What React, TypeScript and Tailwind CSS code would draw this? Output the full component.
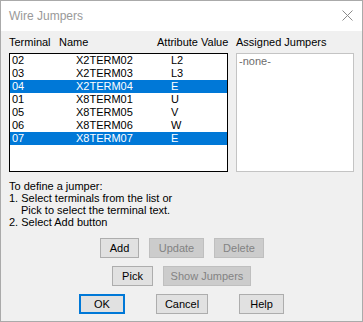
const rows = [
  { t: '02', n: 'X2TERM02', v: 'L2', sel: false },
  { t: '03', n: 'X2TERM03', v: 'L3', sel: false },
  { t: '04', n: 'X2TERM04', v: 'E', sel: true },
  { t: '01', n: 'X8TERM01', v: 'U', sel: false },
  { t: '05', n: 'X8TERM05', v: 'V', sel: false },
  { t: '06', n: 'X8TERM06', v: 'W', sel: false },
  { t: '07', n: 'X8TERM07', v: 'E', sel: true },
]

function Btn({ label, w, disabled, def }: { label: string; w: string; disabled?: boolean; def?: boolean }) {
  const base = 'h-[20px] flex items-center justify-center text-[11px] leading-none whitespace-nowrap'
  if (def) {
    return <div className={`${base} ${w} border-2 border-[#0078d7] bg-[#e1e1e1] text-black`}>{label}</div>
  }
  if (disabled) {
    return <div className={`${base} ${w} border border-[#bfbfbf] bg-[#cccccc] text-[#838383]`}>{label}</div>
  }
  return <div className={`${base} ${w} border border-[#adadad] bg-[#e1e1e1] text-black`}>{label}</div>
}

export default function App() {
  return (
    <div className="w-[363px] h-[322px] border border-[#aaaaaa] bg-[#f0f0f0] flex flex-col font-['Liberation_Sans',Arial,sans-serif] text-[11px] leading-[13px] text-black select-none">
      <div className="h-[30px] bg-white flex items-center justify-between pl-[8px] pr-[9px] shrink-0">
        <span className="text-[12px] text-[#999999]">Wire Jumpers</span>
        <svg width="11" height="11" viewBox="0 0 11 11" className="mb-[1px]">
          <path d="M0.5 0.5 L10.5 10.5 M10.5 0.5 L0.5 10.5" stroke="#8a8a8a" strokeWidth="1" />
        </svg>
      </div>

      <div className="px-[8px] flex flex-col">
        <div className="flex gap-[8px] mt-[5px]">
          <div className="w-[219px] flex flex-col">
            <div className="flex h-[13px] whitespace-nowrap">
              <span className="w-[50px] shrink-0">Terminal</span>
              <span className="w-[98px] shrink-0">Name</span>
              <span className="shrink-0">Attribute Value</span>
            </div>
            <div className="mt-[4px] h-[119px] border border-black bg-white flex flex-col">
              {rows.map((r) => (
                <div
                  key={r.t}
                  className={`flex h-[13px] pl-[2px] whitespace-nowrap ${r.sel ? 'bg-[#0078d7] text-white' : 'text-black'}`}
                >
                  <span className="w-[64px] shrink-0">{r.t}</span>
                  <span className="w-[95px] shrink-0">{r.n}</span>
                  <span>{r.v}</span>
                </div>
              ))}
            </div>
          </div>
          <div className="w-[120px] flex flex-col">
            <div className="h-[13px] whitespace-nowrap">Assigned Jumpers</div>
            <div className="mt-[4px] h-[119px] border border-[#c4c4c4] bg-white pl-[2px] pt-[1px] text-[#6d6d6d]">
              -none-
            </div>
          </div>
        </div>

        <div className="mt-[8px] flex flex-col leading-[12px]">
          <span>To define a jumper:</span>
          <span>1. Select terminals from the list or</span>
          <span className="pl-[12px]">Pick to select the terminal text.</span>
          <span>2. Select Add button</span>
        </div>

        <div className="mt-[10px] flex gap-[10px] ml-[91px]">
          <Btn label="Add" w="w-[39px]" />
          <Btn label="Update" w="w-[55px]" disabled />
          <Btn label="Delete" w="w-[50px]" disabled />
        </div>
        <div className="mt-[8px] flex gap-[10px] ml-[103px]">
          <Btn label="Pick" w="w-[41px]" />
          <Btn label="Show Jumpers" w="w-[88px]" disabled />
        </div>
        <div className="mt-[8px] flex ml-[70px]">
          <Btn label="OK" w="w-[46px]" def />
          <div className="ml-[31px]">
            <Btn label="Cancel" w="w-[52px]" />
          </div>
          <div className="ml-[31px]">
            <Btn label="Help" w="w-[45px]" />
          </div>
        </div>
      </div>
    </div>
  )
}
